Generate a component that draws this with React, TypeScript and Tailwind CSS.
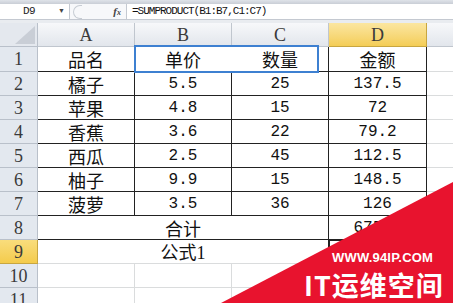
import React from "react";

const data: string[][] = [
  ["品名", "单价", "数量", "金额"],
  ["橘子", "5.5", "25", "137.5"],
  ["苹果", "4.8", "15", "72"],
  ["香蕉", "3.6", "22", "79.2"],
  ["西瓜", "2.5", "45", "112.5"],
  ["柚子", "9.9", "15", "148.5"],
  ["菠萝", "3.5", "36", "126"],
];

const cjk = "font-['Noto_Sans_CJK_SC',sans-serif] text-[18px] leading-[20px] text-[#111]";
const num = "font-['Liberation_Mono',monospace] text-[16px] leading-[20px] text-[#111]";
const serif = "font-['Liberation_Serif',serif]";

function isCjk(s: string) {
  return /[\u4e00-\u9fff]/.test(s);
}

function RowHead({ n, active }: { n: number; active?: boolean }) {
  return (
    <div
      className={
        active
          ? `flex items-center justify-center border-r border-b border-[#c8a640] bg-linear-to-b from-[#f9dd7c] to-[#f4cb4a] text-[18px] leading-[20px] text-[#3a3a3a] ${serif}`
          : `flex items-center justify-center border-r border-b border-[#b9c0ca] bg-[#e3e8ef] text-[18px] leading-[20px] text-[#3a3a3a] ${serif}`
      }
    >
      {n}
    </div>
  );
}

function ColHead({ l, active }: { l: string; active?: boolean }) {
  return (
    <div
      className={
        active
          ? `flex items-center justify-center border-r border-b border-[#c8a640] bg-linear-to-b from-[#fbe6a0] to-[#f4cd55] text-[18px] leading-[20px] text-[#3a3a3a] ${serif}`
          : `flex items-center justify-center border-r border-b border-[#c0c6ce] bg-linear-to-b from-[#f7f8fa] to-[#e2e6ec] text-[18px] leading-[20px] text-[#3a3a3a] ${serif}`
      }
    >
      {l}
    </div>
  );
}

function Txt({ s }: { s: string }) {
  return <span className={isCjk(s) ? cjk : num}>{s}</span>;
}

export default function App() {
  return (
    <div className="relative w-[453px] h-[303px] overflow-hidden bg-white">
      {/* top strip */}
      <div className="h-[4px] bg-linear-to-b from-[#dfe3e9] to-[#c9ced6]" />
      {/* formula bar */}
      <div className="flex h-[16px] bg-white border-b border-[#c4c9d1]">
        <div className="relative flex w-[70px] items-center border-r border-[#c4c9d1]">
          <span className="w-[58px] text-center font-['Liberation_Mono',monospace] text-[11px] tracking-[-0.5px] text-[#222]">
            D9
          </span>
          <span className="text-[7px] text-[#444]">▼</span>
        </div>
        <div className="flex w-[57px] items-center border-r border-[#c4c9d1] bg-[#f7f8fa]">
          <div className="ml-[3px] h-[14px] w-[9px] rounded-l-full border-l border-t border-b border-[#c7ccd3]" />
          <span className="ml-auto mr-[5px] font-['Liberation_Serif',serif] text-[11px] italic font-bold text-[#444]">
            f<span className="text-[8px]">x</span>
          </span>
        </div>
        <div className="flex flex-1 items-center pl-[5px]">
          <span className="font-['Liberation_Mono',monospace] text-[11px] tracking-[-1px] text-[#111]">
            =SUMPRODUCT(B1:B7,C1:C7)
          </span>
        </div>
      </div>
      <div className="h-[3px] bg-[#e9ecf0]" />

      {/* grid */}
      <div className="grid grid-cols-[38px_97px_97px_97px_98px_1fr] grid-rows-[24px_25px_repeat(10,24px)]">
        {/* header row */}
        <div className="relative border-r border-b border-[#b9c0ca] bg-[#e4e8ee]">
          <svg className="absolute right-[2px] bottom-[2px]" width="20" height="18" viewBox="0 0 20 18">
            <polygon points="20,0 20,18 0,18" fill="#c9ced6" />
          </svg>
        </div>
        <ColHead l="A" />
        <ColHead l="B" />
        <ColHead l="C" />
        <ColHead l="D" active />
        <div className="border-b border-[#c0c6ce] bg-linear-to-b from-[#f7f8fa] to-[#e2e6ec]" />

        {data.map((r, i) => (
          <React.Fragment key={i}>
            <RowHead n={i + 1} />
            <div className="flex items-center justify-center border-r border-b border-[#222]">
              <Txt s={r[0]} />
            </div>
            <div
              className={
                i === 0
                  ? "flex items-center justify-center border-b border-r border-r-white border-b-[#222]"
                  : "flex items-center justify-center border-r border-b border-[#222]"
              }
            >
              <Txt s={r[1]} />
            </div>
            <div className="flex items-center justify-center border-r border-b border-[#222]">
              <Txt s={r[2]} />
            </div>
            <div className="flex items-center justify-center border-r border-b border-[#222]">
              <Txt s={r[3]} />
            </div>
            <div className="border-b border-[#dadcdd]" />
          </React.Fragment>
        ))}

        {/* row 8 */}
        <RowHead n={8} />
        <div className="col-span-3 flex items-center justify-center border-r border-b border-[#222]">
          <Txt s="合计" />
        </div>
        <div className="flex items-center justify-center border-r border-b border-[#222]">
          <Txt s="675.7" />
        </div>
        <div className="border-b border-[#dadcdd]" />

        {/* row 9 */}
        <RowHead n={9} active />
        <div className="col-span-3 flex items-center justify-center border-r border-b border-r-[#222] border-b-[#dadcdd]">
          <span className={cjk}>
            公式<span className={`${serif} text-[18px]`}>1</span>
          </span>
        </div>
        <div className="relative border-r border-b border-[#dadcdd]">
          <div className="absolute -left-[1px] -top-[1px] right-0 bottom-0 border-2 border-[#222]" />
        </div>
        <div className="border-b border-[#dadcdd]" />

        {/* rows 10-11 */}
        {[10, 11].map((n) => (
          <React.Fragment key={n}>
            <RowHead n={n} />
            <div className="border-r border-b border-[#dadcdd]" />
            <div className="border-r border-b border-[#dadcdd]" />
            <div className="border-r border-b border-[#dadcdd]" />
            <div className="border-r border-b border-[#dadcdd]" />
            <div className="border-b border-[#dadcdd]" />
          </React.Fragment>
        ))}
      </div>

      {/* selection shape over B1:C1 */}
      <div className="absolute left-[134px] top-[45px] h-[28px] w-[185px] border-2 border-[#3d80d1]" />

      {/* watermark */}
      <svg className="absolute left-0 top-0 pointer-events-none" width="453" height="303" viewBox="0 0 453 303">
        <polygon points="453,182 453,303 221,303" fill="#e8132e" />
      </svg>
      <div className="absolute left-[332px] top-[251px] font-['Liberation_Sans',sans-serif] text-[13px] font-bold leading-none tracking-[0.2px] text-white">
        WWW.94IP.COM
      </div>
      <div className="absolute left-[304px] top-[270px] font-['Noto_Sans_CJK_SC',sans-serif] text-[27px] font-bold leading-[30px] tracking-[1px] text-white whitespace-nowrap">
        IT运维空间
      </div>
    </div>
  );
}
